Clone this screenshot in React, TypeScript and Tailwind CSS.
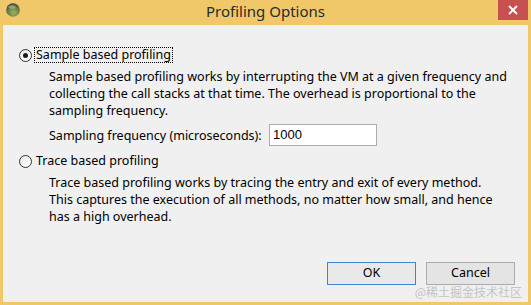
import React from "react";

const Radio = ({ checked }: { checked: boolean }) => (
  <span className="relative flex h-[13px] w-[13px] shrink-0 items-center justify-center rounded-full border border-[#333333] bg-gradient-to-br from-[#e6e6e6] to-[#ffffff]">
    {checked && <span className="h-[5px] w-[5px] rounded-full bg-[#1a1a1a]" />}
  </span>
);

const TitleIcon = () => (
  <svg width="14" height="14" viewBox="0 0 14 14">
    <defs>
      <radialGradient id="g1" cx="0.55" cy="0.7" r="0.7">
        <stop offset="0" stopColor="#9fb45a" />
        <stop offset="0.5" stopColor="#6f8a50" />
        <stop offset="1" stopColor="#3a4436" />
      </radialGradient>
    </defs>
    <circle cx="7" cy="7" r="6.8" fill="url(#g1)" />
    <ellipse cx="6" cy="4" rx="3.5" ry="1.8" fill="#b9c3b0" opacity="0.55" />
  </svg>
);

export default function App() {
  const font = { fontFamily: '"Noto Sans", "Open Sans", sans-serif' };
  return (
    <div className="flex h-[305px] w-[531px] flex-col bg-[#f0c86a] px-[3px] pb-[3px]" style={font}>
      <div className="grid h-[25px] shrink-0 grid-cols-[1fr_auto_1fr] items-start">
        <div className="pl-[3px] pt-[3px]">
          <TitleIcon />
        </div>
        <div className="pt-[1px] text-[15px] leading-[20px] text-[#2a2a2a]">Profiling Options</div>
        <div className="flex justify-end">
          <div className="flex h-[20px] w-[30px] items-center justify-center bg-[#c75050]">
            <svg width="10" height="10" viewBox="0 0 10 10">
              <path d="M1 1 L9 9 M9 1 L1 9" stroke="#ffffff" strokeWidth="1.8" />
            </svg>
          </div>
        </div>
      </div>
      <div className="relative flex flex-1 flex-col bg-[#f0f0f0] text-[12.5px] text-[#000000]">
        <div className="ml-[16px] mt-[22px] flex h-[16px] items-center gap-[2px]">
          <Radio checked />
          <span className="border border-dotted border-[#000000] px-[1px] leading-[14px]">Sample based profiling</span>
        </div>
        <div className="ml-[46px] mt-[5px] leading-[17px]">
          <div>Sample based profiling works by interrupting the VM at a given frequency and</div>
          <div>collecting the call stacks at that time. The overhead is proportional to the</div>
          <div>sampling frequency.</div>
        </div>
        <div className="ml-[46px] mt-[5px] flex h-[22px] items-center">
          <span className="w-[220px] whitespace-nowrap leading-[17px]">Sampling frequency (microseconds):</span>
          <div className="flex h-[22px] w-[108px] items-center border border-[#acacac] bg-white pl-[3px] text-[13px]" style={{ fontFamily: '"Liberation Sans", Arial, sans-serif' }}>
            1000
          </div>
        </div>
        <div className="ml-[16px] mt-[7px] flex h-[16px] items-center gap-[2px]">
          <Radio checked={false} />
          <span className="border border-transparent px-[1px] leading-[14px]">Trace based profiling</span>
        </div>
        <div className="ml-[46px] mt-[5px] leading-[17px]">
          <div>Trace based profiling works by tracing the entry and exit of every method.</div>
          <div>This captures the execution of all methods, no matter how small, and hence</div>
          <div>has a high overhead.</div>
        </div>
        <div className="mr-[13px] mt-auto mb-[17px] flex justify-end gap-[10px]">
          <div className="flex h-[23px] w-[89px] items-center justify-center border border-[#3c88d0] bg-[#e9e9e9]">OK</div>
          <div className="flex h-[23px] w-[89px] items-center justify-center border border-[#acacac] bg-[#e4e4e4]">Cancel</div>
        </div>
        <div
          className="absolute bottom-[3px] right-[6px] text-[12px] leading-[14px] text-[#c4c4c4]"
          style={{ fontFamily: '"Noto Sans CJK SC", sans-serif' }}
        >
          @稀土掘金技术社区
        </div>
      </div>
    </div>
  );
}
